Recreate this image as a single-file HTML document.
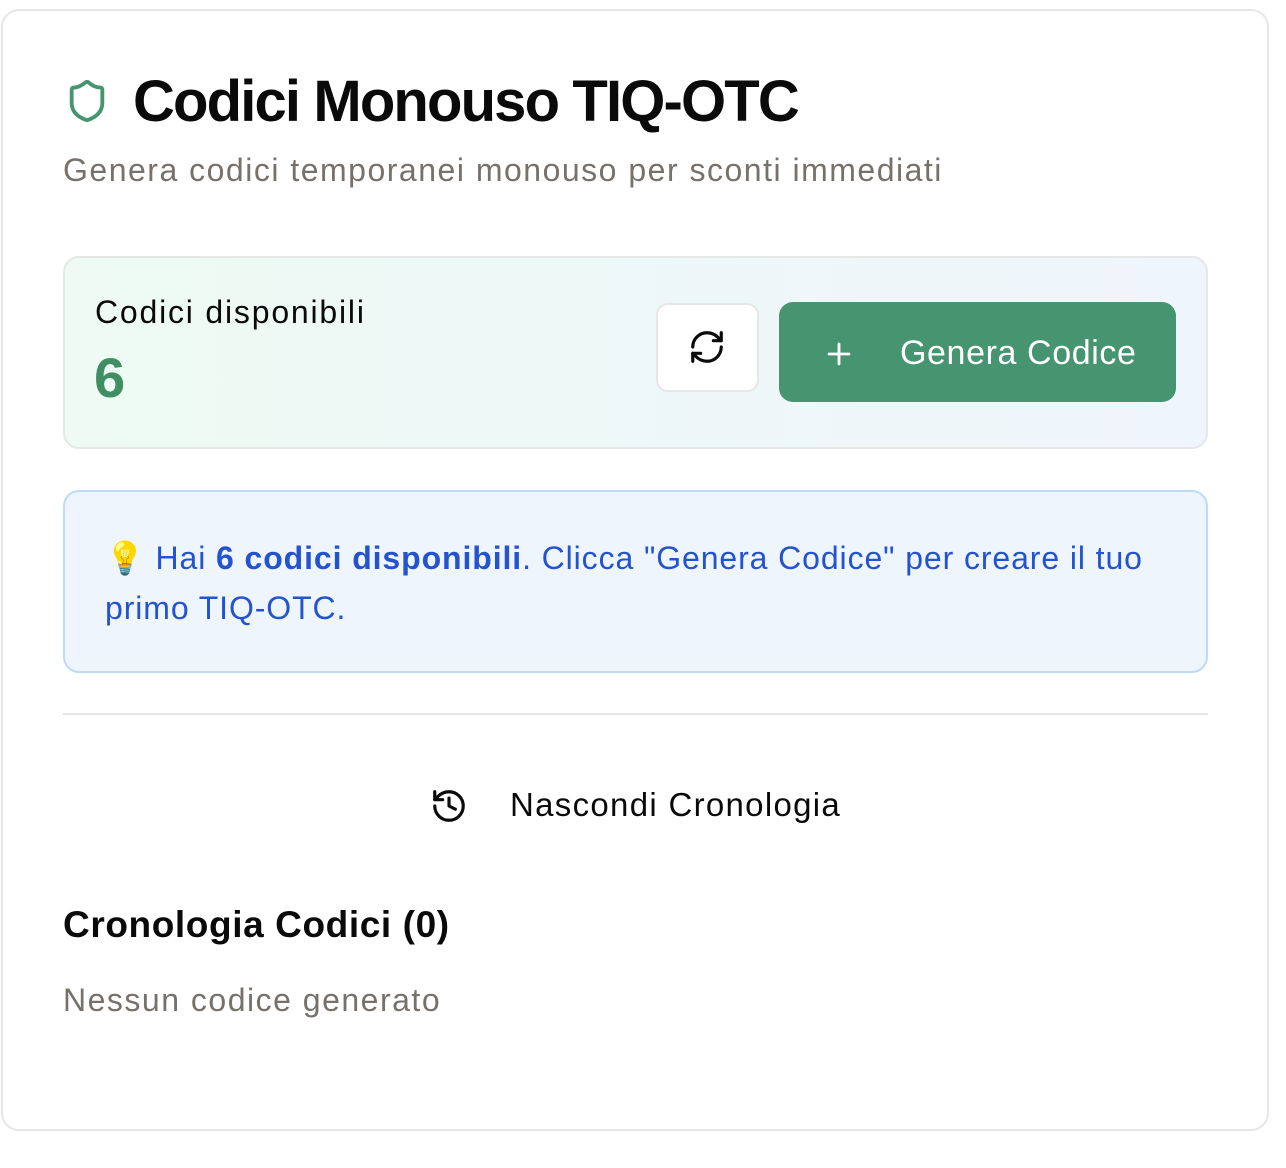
<!DOCTYPE html>
<html><head><meta charset="utf-8"><style>
*{box-sizing:border-box;margin:0;padding:0}
body{width:1286px;height:1168px;background:#fff;font-family:"Liberation Sans",sans-serif;position:relative;overflow:hidden}
.card{position:absolute;left:1px;top:9px;width:1268px;height:1122px;border:2px solid #e6e6e6;border-radius:18px;background:#fff}
.abs{position:absolute;white-space:nowrap}
</style></head><body>
<div class="card"></div>
<svg class="abs" style="left:64px;top:76px" width="46" height="50" viewBox="0 0 24 24" fill="none" stroke="#469470" stroke-width="2" stroke-linecap="round" stroke-linejoin="round"><path d="M20 13c0 5-3.5 7.5-7.66 8.95a1 1 0 0 1-.67-.01C7.5 20.5 4 18 4 13V6a1 1 0 0 1 1-1c2 0 4.5-1.2 6.24-2.72a1.17 1.17 0 0 1 1.52 0C14.51 3.81 17 5 19 5a1 1 0 0 1 1 1z"/></svg>
<div class="abs" style="left:133px;top:68px;font-size:58px;font-weight:bold;color:#0a0a0a;letter-spacing:-1.85px">Codici Monouso TIQ-OTC</div>
<div class="abs" style="left:63px;top:152px;font-size:32px;color:#77716c;letter-spacing:1.5px">Genera codici temporanei monouso per sconti immediati</div>
<div class="abs" style="left:63px;top:256px;width:1145px;height:193px;border:2px solid #e4e8e6;border-radius:16px;background:linear-gradient(90deg,#eefaf3,#eff5fc)"></div>
<div class="abs" style="left:95px;top:294px;font-size:32px;color:#0a0a0a;letter-spacing:1.8px">Codici disponibili</div>
<div class="abs" style="left:94px;top:345px;font-size:56px;font-weight:bold;color:#3f8f63">6</div>
<div class="abs" style="left:656px;top:303px;width:103px;height:89px;background:#fff;border:2px solid #e6e6e6;border-radius:12px"></div>
<svg class="abs" style="left:688px;top:328px" width="38" height="38" viewBox="0 0 24 24" fill="none" stroke="#0a0a0a" stroke-width="2" stroke-linecap="round" stroke-linejoin="round"><path d="M3 12a9 9 0 0 1 9-9 9.75 9.75 0 0 1 6.74 2.74L21 8"/><path d="M21 3v5h-5"/><path d="M21 12a9 9 0 0 1-9 9 9.75 9.75 0 0 1-6.74-2.74L3 16"/><path d="M8 16H3v5"/></svg>
<div class="abs" style="left:779px;top:302px;width:397px;height:100px;background:#469470;border-radius:14px"></div>
<svg class="abs" style="left:822px;top:337px" width="34" height="34" viewBox="0 0 24 24" fill="none" stroke="#fff" stroke-width="2" stroke-linecap="round"><path d="M5 12h14M12 5v14"/></svg>
<div class="abs" style="left:900px;top:334px;font-size:34px;color:#fff;letter-spacing:0.6px">Genera Codice</div>
<div class="abs" style="left:63px;top:490px;width:1145px;height:183px;border:2px solid #bfd9f8;border-radius:16px;background:#eef5fd"></div>
<div class="abs" style="left:105px;top:533px;font-size:32px;line-height:50px;color:#2453d0;white-space:normal;width:1070px;letter-spacing:0.9px">💡 Hai <b>6 codici disponibili</b>. Clicca "Genera Codice" per creare il tuo primo TIQ-OTC.</div>
<div class="abs" style="left:63px;top:713px;width:1145px;height:2px;background:#e6e6e6"></div>
<svg class="abs" style="left:430px;top:787px" width="38" height="38" viewBox="0 0 24 24" fill="none" stroke="#0a0a0a" stroke-width="2" stroke-linecap="round" stroke-linejoin="round"><path d="M3 12a9 9 0 1 0 9-9 9.75 9.75 0 0 0-6.74 2.74L3 8"/><path d="M3 3v5h5"/><path d="M12 7v5l4 2"/></svg>
<div class="abs" style="left:510px;top:786px;font-size:33px;color:#0a0a0a;letter-spacing:1.3px">Nascondi Cronologia</div>
<div class="abs" style="left:63px;top:904px;font-size:37px;font-weight:bold;color:#0a0a0a;letter-spacing:0.6px">Cronologia Codici (0)</div>
<div class="abs" style="left:63px;top:982px;font-size:32px;color:#77716c;letter-spacing:1.5px">Nessun codice generato</div>
</body></html>
